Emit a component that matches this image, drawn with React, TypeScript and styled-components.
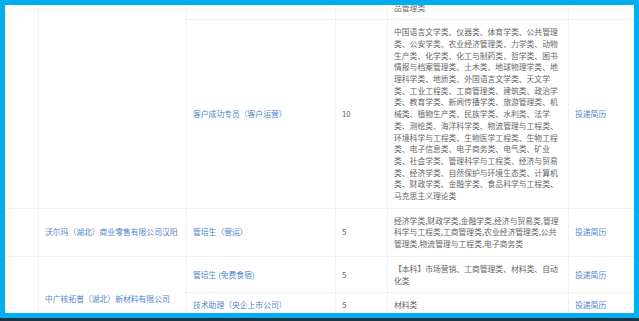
import React from "react";
import styled, { createGlobalStyle } from "styled-components";

const Global = createGlobalStyle`
  html, body { margin: 0; padding: 0; }
  body { background: #00aeef; font-family: "Noto Sans CJK SC", "Noto Sans", sans-serif; }
`;

const Frame = styled.div`
  width: 639px;
  height: 321px;
  box-sizing: border-box;
  background: #00aeef;
  padding: 5px 5px 0 5px;
  display: flex;
  flex-direction: column;
`;

const Viewport = styled.div`
  height: 308px;
  background: #fff;
  overflow: hidden;
`;

const BlueGap = styled.div`
  height: 5px;
`;

const DarkEdge = styled.div`
  height: 3px;
  margin: 0 -5px;
  background: #1d3346;
`;

const Table = styled.table`
  width: 629px;
  table-layout: fixed;
  border-collapse: collapse;
  margin-top: -10.5px;
  font-size: 7.8px;
  line-height: 11.7px;
  color: #666;
`;

const Cell = styled.td<{ $tone?: "link" | "text" }>`
  border: 1px solid #eef0f4;
  padding: 6px 6px;
  vertical-align: middle;
  text-align: left;
  color: ${(p) => (p.$tone === "link" ? "#4f86c6" : "#666")};
  word-break: break-all;
`;

const Link = styled.a`
  color: #4f86c6;
  text-decoration: none;
`;

type Job = {
  position: string;
  count: string;
  majors: string;
};

type Group = {
  company: string;
  jobs: Job[];
};

const groups: Group[] = [
  {
    company: "沃尔玛（湖北）商业零售有限公司汉阳",
    jobs: [
      {
        position: "管培生（营运）",
        count: "5",
        majors:
          "经济学类,财政学类,金融学类,经济与贸易类,管理科学与工程类,工商管理类,农业经济管理类,公共管理类,物流管理与工程类,电子商务类",
      },
    ],
  },
  {
    company: "中广核拓普（湖北）新材料有限公司",
    jobs: [
      {
        position: "管培生 (免费食宿)",
        count: "5",
        majors: "【本科】市场营销、工商管理类、材料类、自动化类",
      },
      { position: "技术助理（央企上市公司）", count: "5", majors: "材料类" },
      { position: "储备干部", count: "5", majors: "不限专业" },
    ],
  },
];

const bigMajors =
  "中国语言文学类、仪器类、体育学类、公共管理类、公安学类、农业经济管理类、力学类、动物生产类、化学类、化工与制药类、哲学类、图书情报与档案管理类、土木类、地球物理学类、地理科学类、地质类、外国语言文学类、天文学类、工业工程类、工商管理类、建筑类、政治学类、教育学类、新闻传播学类、旅游管理类、机械类、植物生产类、民族学类、水利类、法学类、测绘类、海洋科学类、物流管理与工程类、环境科学与工程类、生物医学工程类、生物工程类、电子信息类、电子商务类、电气类、矿业类、社会学类、管理科学与工程类、经济与贸易类、经济学类、自然保护与环境生态类、计算机类、财政学类、金融学类、食品科学与工程类、马克思主义理论类";

export default function App() {
  return (
    <>
      <Global />
      <Frame>
        <Viewport>
          <Table>
            <colgroup>
              <col style={{ width: 33 }} />
              <col style={{ width: 148 }} />
              <col style={{ width: 149 }} />
              <col style={{ width: 52 }} />
              <col style={{ width: 181 }} />
              <col style={{ width: 66 }} />
            </colgroup>
            <tbody>
              <tr>
                <Cell rowSpan={2} />
                <Cell rowSpan={2} $tone="link" />
                <Cell $tone="link" />
                <Cell />
                <Cell>品管理类</Cell>
                <Cell $tone="link" />
              </tr>
              <tr>
                <Cell $tone="link">客户成功专员（客户运营）</Cell>
                <Cell>10</Cell>
                <Cell>{bigMajors}</Cell>
                <Cell $tone="link">
                  <Link href="#">投递简历</Link>
                </Cell>
              </tr>
              {groups.map((g) =>
                g.jobs.map((j, i) => (
                  <tr key={g.company + i}>
                    {i === 0 && <Cell rowSpan={g.jobs.length} />}
                    {i === 0 && (
                      <Cell rowSpan={g.jobs.length} $tone="link">
                        {g.company}
                      </Cell>
                    )}
                    <Cell $tone="link">{j.position}</Cell>
                    <Cell>{j.count}</Cell>
                    <Cell>{j.majors}</Cell>
                    <Cell $tone="link">
                      <Link href="#">投递简历</Link>
                    </Cell>
                  </tr>
                ))
              )}
            </tbody>
          </Table>
        </Viewport>
        <BlueGap />
        <DarkEdge />
      </Frame>
    </>
  );
}
